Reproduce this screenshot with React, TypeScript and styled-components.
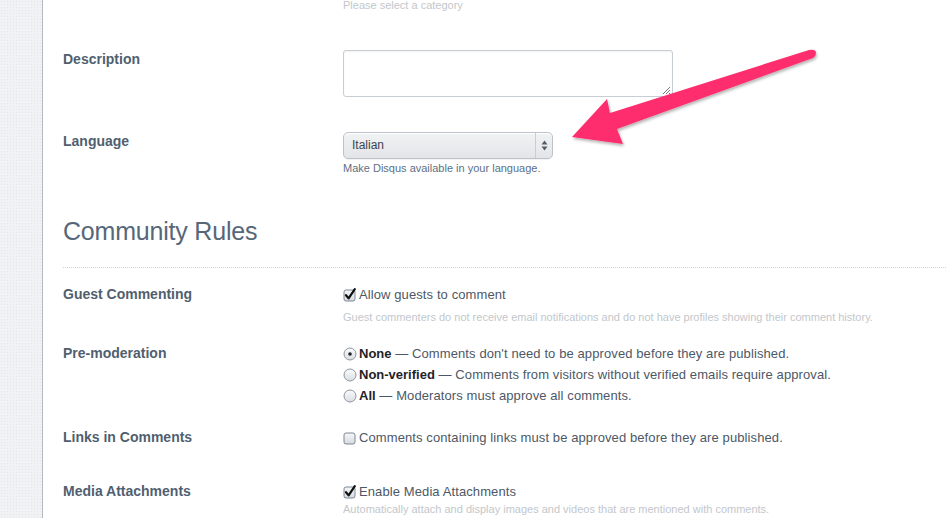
import styled, { createGlobalStyle } from 'styled-components';

const GlobalStyle = createGlobalStyle`
    html, body {
        margin: 0;
        padding: 0;
        background: #fff;
    }
    body {
        font-family: "Liberation Sans", Arial, Helvetica, sans-serif;
        -webkit-font-smoothing: antialiased;
    }
`;

const Page = styled.div`
    position: relative;
    display: flex;
    width: 946px;
    height: 518px;
    overflow: hidden;
`;

const Sidebar = styled.div`
    flex: 0 0 42px;
    background-color: #f1f2f4;
    background-image: radial-gradient(#e2e5e9 0.8px, transparent 1px);
    background-size: 3px 3px;
    border-right: 1px solid #b3b9c1;
`;

const Main = styled.div`
    flex: 1;
    padding-left: 20px;
`;

const Row = styled.div<{ $top: number }>`
    display: grid;
    grid-template-columns: 280px 1fr;
    margin-top: ${(p) => p.$top}px;
`;

const Label = styled.div<{ $lh?: number }>`
    font-size: 14px;
    font-weight: 700;
    color: #505f6f;
    line-height: ${(p) => p.$lh || 18}px;
`;

const Controls = styled.div`
    display: flex;
    flex-direction: column;
`;

const Help = styled.div<{ $top?: number; $tone?: 'light' | 'blue' }>`
    font-size: 11px;
    line-height: 14px;
    margin-top: ${(p) => p.$top || 0}px;
    color: ${(p) => (p.$tone === 'blue' ? '#5d7086' : '#c3c7cc')};
`;

const TopHelp = styled(Help)`
    margin-left: 280px;
    margin-top: -2px;
`;

const TextArea = styled.div`
    position: relative;
    width: 328px;
    height: 45px;
    border: 1px solid #c7cdd4;
    border-radius: 3px;
    box-shadow: inset 0 1px 2px rgba(0, 0, 0, 0.05);
`;

const Grip = styled.svg`
    position: absolute;
    right: 1px;
    bottom: 1px;
`;

const Select = styled.div`
    display: flex;
    align-items: stretch;
    width: 208px;
    height: 25px;
    border: 1px solid #bcc2c9;
    border-radius: 5px;
    background: linear-gradient(#f1f2f4, #e3e5e8);
    box-shadow: inset 0 1px 0 #fff, 0 1px 1px rgba(0, 0, 0, 0.06);
`;

const SelectValue = styled.div`
    flex: 1;
    padding-left: 8px;
    font-size: 12px;
    line-height: 25px;
    color: #3d4550;
`;

const SelectArrows = styled.div`
    width: 16px;
    border-left: 1px solid #c9cdd2;
    display: flex;
    align-items: center;
    justify-content: center;
`;

const Heading = styled.h2`
    margin: 41px 0 0;
    font-size: 25px;
    line-height: 30px;
    font-weight: 400;
    color: #56677a;
    letter-spacing: -0.2px;
`;

const Separator = styled.hr`
    margin: 21px 0 0;
    border: 0;
    border-top: 1px dotted #cfd3d8;
    height: 0;
`;

const Option = styled.div`
    display: flex;
    align-items: center;
    gap: 2px;
    font-size: 13px;
    line-height: 21px;
    letter-spacing: 0.1px;
    color: #4d5866;
`;

const Strong = styled.b`
    color: #1f2328;
    letter-spacing: 0;
`;

const Box = styled.svg`
    flex: 0 0 auto;
`;

const Arrow = styled.svg`
    position: absolute;
    left: 0;
    top: 0;
    pointer-events: none;
`;

const Checkbox = ({ checked }: { checked?: boolean }) => (
    <Box width="14" height="14" viewBox="0 0 14 14">
        <defs>
            <linearGradient id="cbg" x1="0" y1="0" x2="0" y2="1">
                <stop offset="0" stopColor="#f6f7f9" />
                <stop offset="1" stopColor="#d6dae0" />
            </linearGradient>
        </defs>
        <rect x="1" y="2" width="11" height="11" rx="2" fill="url(#cbg)" stroke="#7f8893" strokeWidth="1" />
        {checked && (
            <path d="M3 7.2 L5.6 10.4 L11.8 1.2" fill="none" stroke="#111" strokeWidth="2.2" strokeLinecap="round" strokeLinejoin="round" />
        )}
    </Box>
);

const Radio = ({ checked }: { checked?: boolean }) => (
    <Box width="14" height="14" viewBox="0 0 14 14">
        <defs>
            <linearGradient id="rbg" x1="0" y1="0" x2="0" y2="1">
                <stop offset="0" stopColor="#fafbfc" />
                <stop offset="1" stopColor="#d9dde2" />
            </linearGradient>
        </defs>
        <circle cx="7" cy="7" r="6" fill="url(#rbg)" stroke="#8e969f" strokeWidth="1" />
        {checked && <circle cx="7" cy="7" r="1.8" fill="#222" />}
    </Box>
);

const App = () => {
    return (
        <>
            <GlobalStyle />
            <Page>
                <Sidebar />
                <Main>
                    <TopHelp>Please select a category</TopHelp>

                    <Row $top={38}>
                        <Label>Description</Label>
                        <Controls>
                            <TextArea>
                                <Grip width="9" height="9" viewBox="0 0 9 9">
                                    <path d="M1 8 L8 1 M4 8 L8 4 M7 8 L8 7" stroke="#777" strokeWidth="1" />
                                </Grip>
                            </TextArea>
                        </Controls>
                    </Row>

                    <Row $top={35}>
                        <Label>Language</Label>
                        <Controls>
                            <Select>
                                <SelectValue>Italian</SelectValue>
                                <SelectArrows>
                                    <svg width="7" height="11" viewBox="0 0 7 11">
                                        <path d="M3.5 0.5 L6.5 4.5 L0.5 4.5 Z" fill="#555c66" />
                                        <path d="M3.5 10.5 L6.5 6.5 L0.5 6.5 Z" fill="#555c66" />
                                    </svg>
                                </SelectArrows>
                            </Select>
                            <Help $top={2} $tone="blue">Make Disqus available in your language.</Help>
                        </Controls>
                    </Row>

                    <Heading>Community Rules</Heading>
                    <Separator />

                    <Row $top={16}>
                        <Label $lh={21}>Guest Commenting</Label>
                        <Controls>
                            <Option>
                                <Checkbox checked />
                                Allow guests to comment
                            </Option>
                            <Help $top={5}>
                                Guest commenters do not receive email notifications and do not have profiles showing their comment history.
                            </Help>
                        </Controls>
                    </Row>

                    <Row $top={19}>
                        <Label $lh={21}>Pre-moderation</Label>
                        <Controls>
                            <Option>
                                <Radio checked />
                                <span>
                                    <Strong>None</Strong> — Comments don't need to be approved before they are published.
                                </span>
                            </Option>
                            <Option>
                                <Radio />
                                <span>
                                    <Strong>Non-verified</Strong> — Comments from visitors without verified emails require approval.
                                </span>
                            </Option>
                            <Option>
                                <Radio />
                                <span>
                                    <Strong>All</Strong> — Moderators must approve all comments.
                                </span>
                            </Option>
                        </Controls>
                    </Row>

                    <Row $top={21}>
                        <Label $lh={21}>Links in Comments</Label>
                        <Controls>
                            <Option>
                                <Checkbox />
                                Comments containing links must be approved before they are published.
                            </Option>
                        </Controls>
                    </Row>

                    <Row $top={33}>
                        <Label $lh={21}>Media Attachments</Label>
                        <Controls>
                            <Option>
                                <Checkbox checked />
                                Enable Media Attachments
                            </Option>
                            <Help>Automatically attach and display images and videos that are mentioned with comments.</Help>
                        </Controls>
                    </Row>
                </Main>

                <Arrow width="946" height="518" viewBox="0 0 946 518">
                    <defs>
                        <filter id="shadow" x="-10%" y="-10%" width="120%" height="130%">
                            <feDropShadow dx="1" dy="2" stdDeviation="1.5" floodColor="#000" floodOpacity="0.3" />
                        </filter>
                    </defs>
                    <path
                        d="M572 137 L607 99 L610 113 L809 50 Q816 49 816 53 Q816 56 813 58 L617 129 L623 144 Z"
                        fill="#fe2f6e"
                        filter="url(#shadow)"
                    />
                </Arrow>
            </Page>
        </>
    );
};

export default App;
